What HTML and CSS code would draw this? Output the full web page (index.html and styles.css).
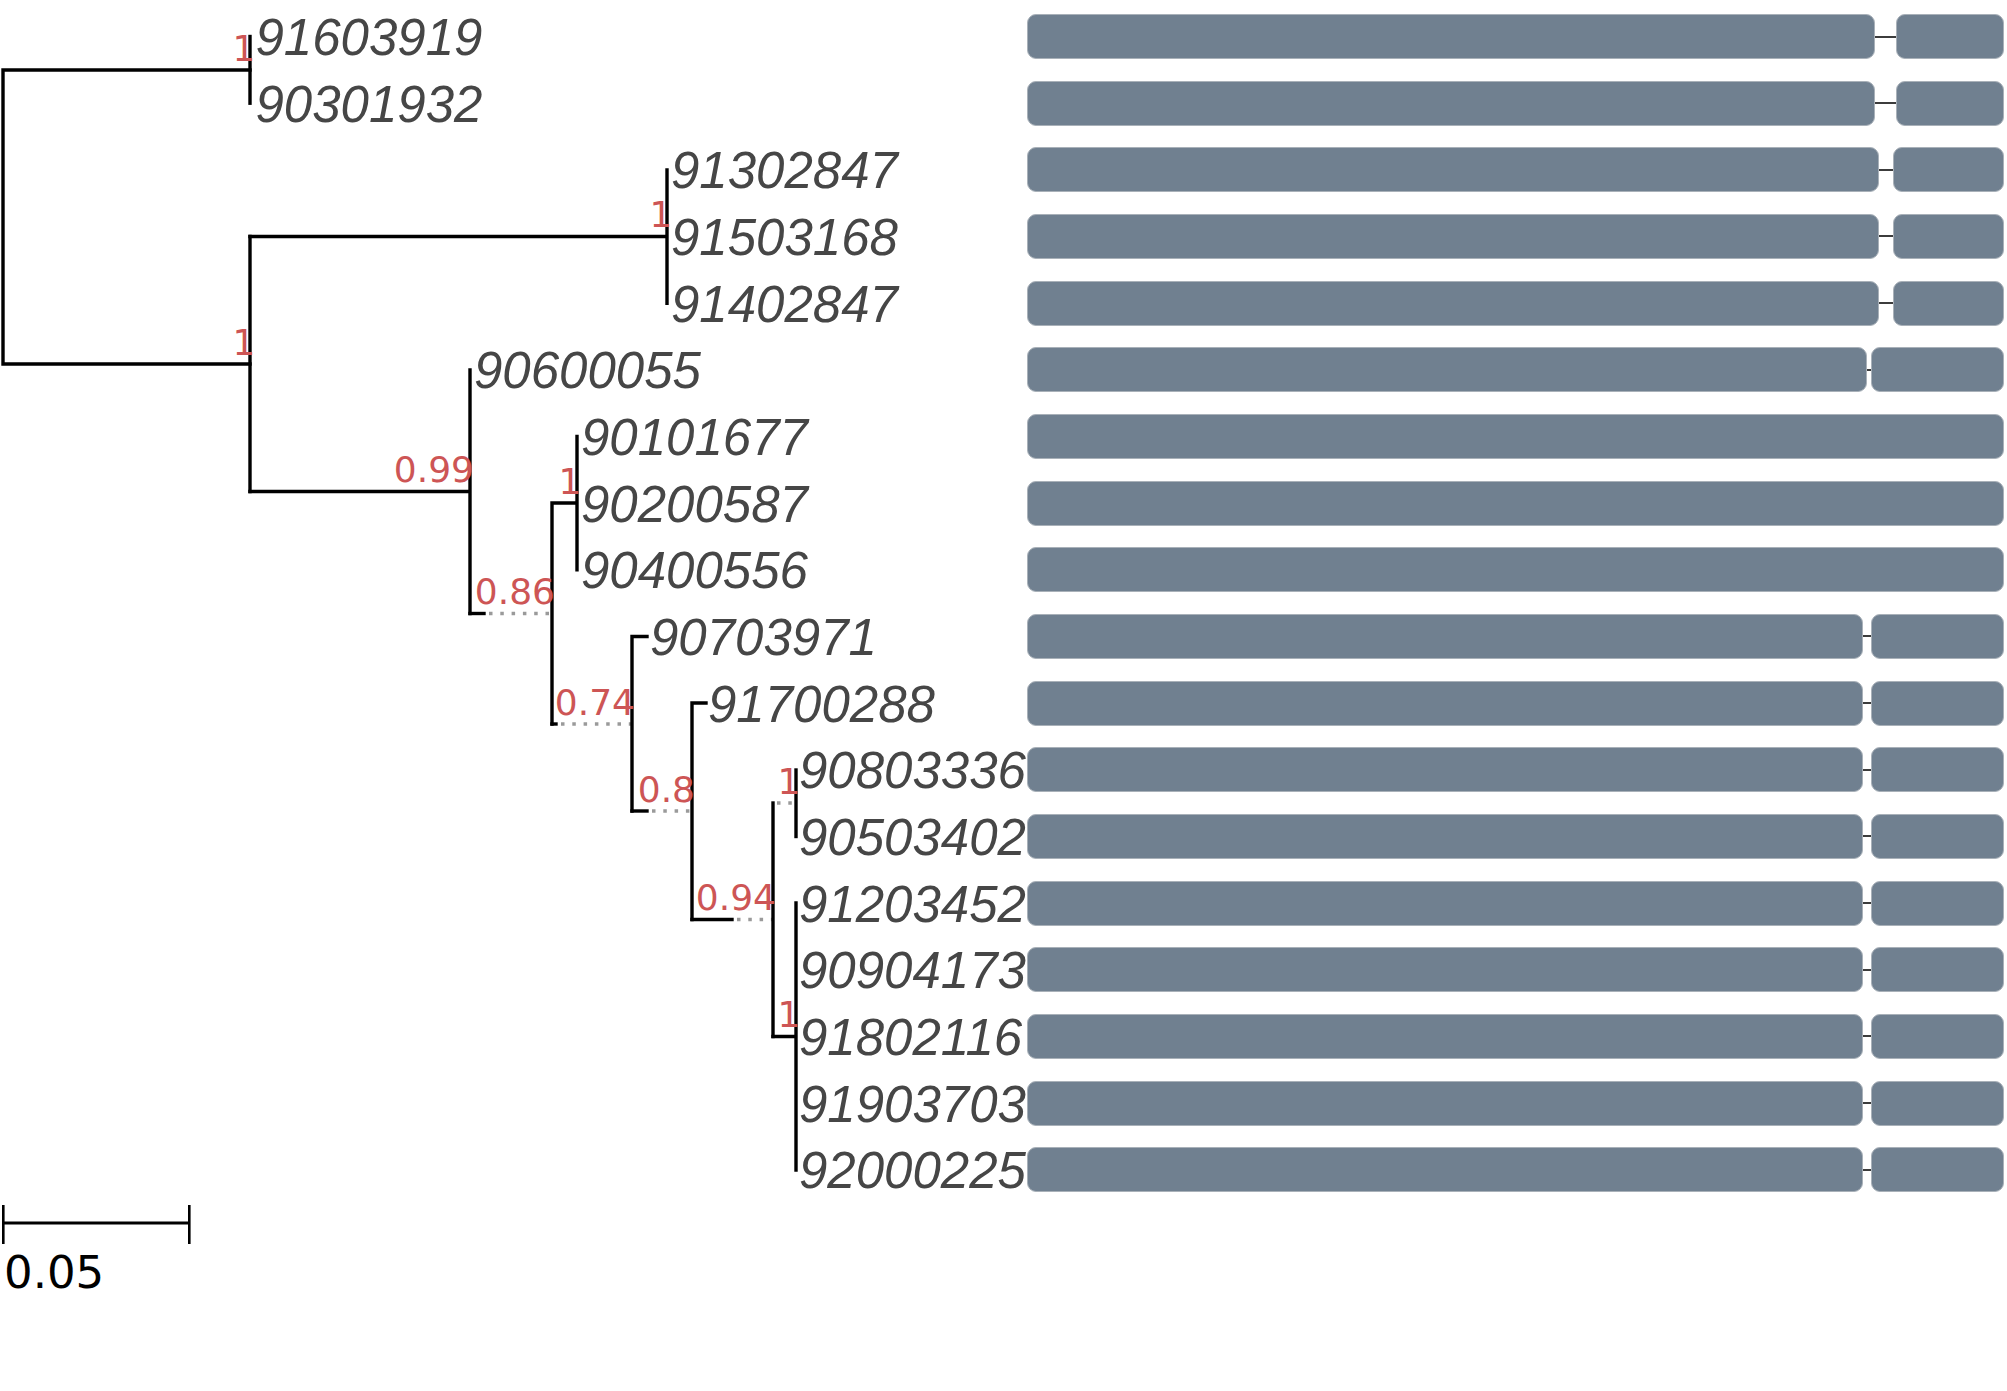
FILE: index.html
```html
<!DOCTYPE html>
<html lang="en">
<head>
<meta charset="utf-8">
<title>Phylogenetic tree with domain tracks</title>
<link rel="stylesheet" href="styles.css">
</head>
<body>
<div class="figure">
  <svg class="tree" width="1027" height="1391" viewBox="0 0 1027 1391">
    <g class="branches">
      <path class="branch" d="M3 70 V364 M3 70 H250 M3 364 H250"/>
      <path class="branch" d="M250 36.5 V103.2"/>
      <path class="branch" d="M250 236.5 V491.5"/>
      <path class="branch" d="M250 236.5 H667 M667 170 V303.2"/>
      <path class="branch" d="M250 491.5 H470 M470 370 V613.5"/>
      <path class="branch" d="M470 613.5 H484"/>
      <path class="weak" d="M489 613.5 H552"/>
      <path class="branch" d="M552 503 V724 M552 503 H577 M577 436.5 V569.8"/>
      <path class="branch" d="M552 724 H556"/>
      <path class="weak" d="M561 724 H632"/>
      <path class="branch" d="M632 636.5 V811 M632 636.5 H647"/>
      <path class="branch" d="M632 811 H647"/>
      <path class="weak" d="M652 811 H692"/>
      <path class="branch" d="M692 703 V919.5 M692 703 H706"/>
      <path class="branch" d="M692 919.5 H732"/>
      <path class="weak" d="M737 919.5 H773"/>
      <path class="branch" d="M773 803 V1036.5"/>
      <path class="weak" d="M777 803 H796"/>
      <path class="branch" d="M796 770 V836.5"/>
      <path class="branch" d="M773 1036.5 H796 M796 903 V1170"/>
    </g>
    <g class="tips">
      <text class="tip" x="255.5" y="55">91603919</text>
      <text class="tip" x="255.5" y="121.7">90301932</text>
      <text class="tip" x="671" y="188.3">91302847</text>
      <text class="tip" x="671" y="255">91503168</text>
      <text class="tip" x="671" y="321.7">91402847</text>
      <text class="tip" x="474" y="388.3">90600055</text>
      <text class="tip" x="581" y="455">90101677</text>
      <text class="tip" x="581" y="521.7">90200587</text>
      <text class="tip" x="581" y="588.3">90400556</text>
      <text class="tip" x="650" y="655">90703971</text>
      <text class="tip" x="708" y="721.7">91700288</text>
      <text class="tip" x="799" y="788.3">90803336</text>
      <text class="tip" x="799" y="855">90503402</text>
      <text class="tip" x="799" y="921.7">91203452</text>
      <text class="tip" x="799" y="988.3">90904173</text>
      <text class="tip" x="799" y="1055">91802116</text>
      <text class="tip" x="799" y="1121.7">91903703</text>
      <text class="tip" x="799" y="1188.3">92000225</text>
    </g>
    <g class="supports">
      <text class="support" x="255.5" y="60.5">1</text>
      <text class="support" x="255.5" y="354.5">1</text>
      <text class="support" x="672.5" y="227">1</text>
      <text class="support" x="474" y="482">0.99</text>
      <text class="support" x="555" y="604">0.86</text>
      <text class="support" x="581.5" y="493.5">1</text>
      <text class="support" x="635" y="714.5">0.74</text>
      <text class="support" x="695" y="801.5">0.8</text>
      <text class="support" x="776" y="910">0.94</text>
      <text class="support" x="800.5" y="793.5">1</text>
      <text class="support" x="800.5" y="1027">1</text>
    </g>
    <g class="scalebar">
      <path class="scale-line" d="M3.3 1223 H189.3"/>
      <path class="scale-tick" d="M3.3 1205 V1244 M189.3 1205 V1244"/>
      <text class="scale-label" x="4" y="1288">0.05</text>
    </g>
  </svg>
  <div class="tracks">
    <div class="track"><div class="seg main-a"></div><div class="link gap-a"></div><div class="seg tail-a"></div></div>
    <div class="track"><div class="seg main-a"></div><div class="link gap-a"></div><div class="seg tail-a"></div></div>
    <div class="track"><div class="seg main-b"></div><div class="link gap-b"></div><div class="seg tail-b"></div></div>
    <div class="track"><div class="seg main-b"></div><div class="link gap-b"></div><div class="seg tail-b"></div></div>
    <div class="track"><div class="seg main-b"></div><div class="link gap-b"></div><div class="seg tail-b"></div></div>
    <div class="track"><div class="seg main-c"></div><div class="link gap-c"></div><div class="seg tail-c"></div></div>
    <div class="track"><div class="seg full"></div></div>
    <div class="track"><div class="seg full"></div></div>
    <div class="track"><div class="seg full"></div></div>
    <div class="track"><div class="seg main-d"></div><div class="link gap-d"></div><div class="seg tail-d"></div></div>
    <div class="track"><div class="seg main-d"></div><div class="link gap-d"></div><div class="seg tail-d"></div></div>
    <div class="track"><div class="seg main-d"></div><div class="link gap-d"></div><div class="seg tail-d"></div></div>
    <div class="track"><div class="seg main-d"></div><div class="link gap-d"></div><div class="seg tail-d"></div></div>
    <div class="track"><div class="seg main-d"></div><div class="link gap-d"></div><div class="seg tail-d"></div></div>
    <div class="track"><div class="seg main-d"></div><div class="link gap-d"></div><div class="seg tail-d"></div></div>
    <div class="track"><div class="seg main-d"></div><div class="link gap-d"></div><div class="seg tail-d"></div></div>
    <div class="track"><div class="seg main-d"></div><div class="link gap-d"></div><div class="seg tail-d"></div></div>
    <div class="track"><div class="seg main-d"></div><div class="link gap-d"></div><div class="seg tail-d"></div></div>
  </div>
</div>
</body>
</html>
```

FILE: styles.css
```css
html, body {
  margin: 0;
  padding: 0;
  background: #ffffff;
}

.figure {
  display: flex;
  width: 2007px;
  height: 1391px;
  overflow: hidden;
}

.tree {
  flex: none;
  display: block;
  width: 1027px;
  height: 1391px;
  overflow: visible;
}

.branch {
  fill: none;
  stroke: #000000;
  stroke-width: 3.4;
  stroke-linecap: square;
}

.weak {
  fill: none;
  stroke: #9a9a9a;
  stroke-width: 3.4;
  stroke-dasharray: 3.5 7.8;
}

.tip {
  font-family: "Liberation Sans", Arial, sans-serif;
  font-style: italic;
  font-size: 51px;
  fill: #464646;
}

.support {
  font-family: "DejaVu Sans", "Liberation Sans", sans-serif;
  font-size: 36px;
  fill: #cd5555;
  text-anchor: end;
}

.scale-line {
  fill: none;
  stroke: #000000;
  stroke-width: 3.2;
}

.scale-tick {
  fill: none;
  stroke: #000000;
  stroke-width: 2.6;
}

.scale-label {
  font-family: "DejaVu Sans", sans-serif;
  font-size: 45px;
  fill: #000000;
}

.tracks {
  flex: none;
  width: 977px;
  display: flex;
  flex-direction: column;
  gap: 21.667px;
  padding-top: 14px;
}

.track {
  display: flex;
  align-items: center;
  height: 45px;
}

.seg {
  flex: none;
  box-sizing: border-box;
  height: 45px;
  background: #708090;
  border: 1px solid #a9b1b9;
  border-radius: 9px;
}

.link {
  flex: none;
  height: 2px;
  background: #3c3c3c;
}

.full { width: 977px; }

.main-a { width: 848px; }
.gap-a { width: 21px; }
.tail-a { width: 108px; }

.main-b { width: 851.5px; }
.gap-b { width: 14.5px; }
.tail-b { width: 111px; }

.main-c { width: 840px; }
.gap-c { width: 3.5px; }
.tail-c { width: 133.5px; }

.main-d { width: 836.3px; }
.gap-d { width: 7.4px; }
.tail-d { width: 133.3px; }
```
